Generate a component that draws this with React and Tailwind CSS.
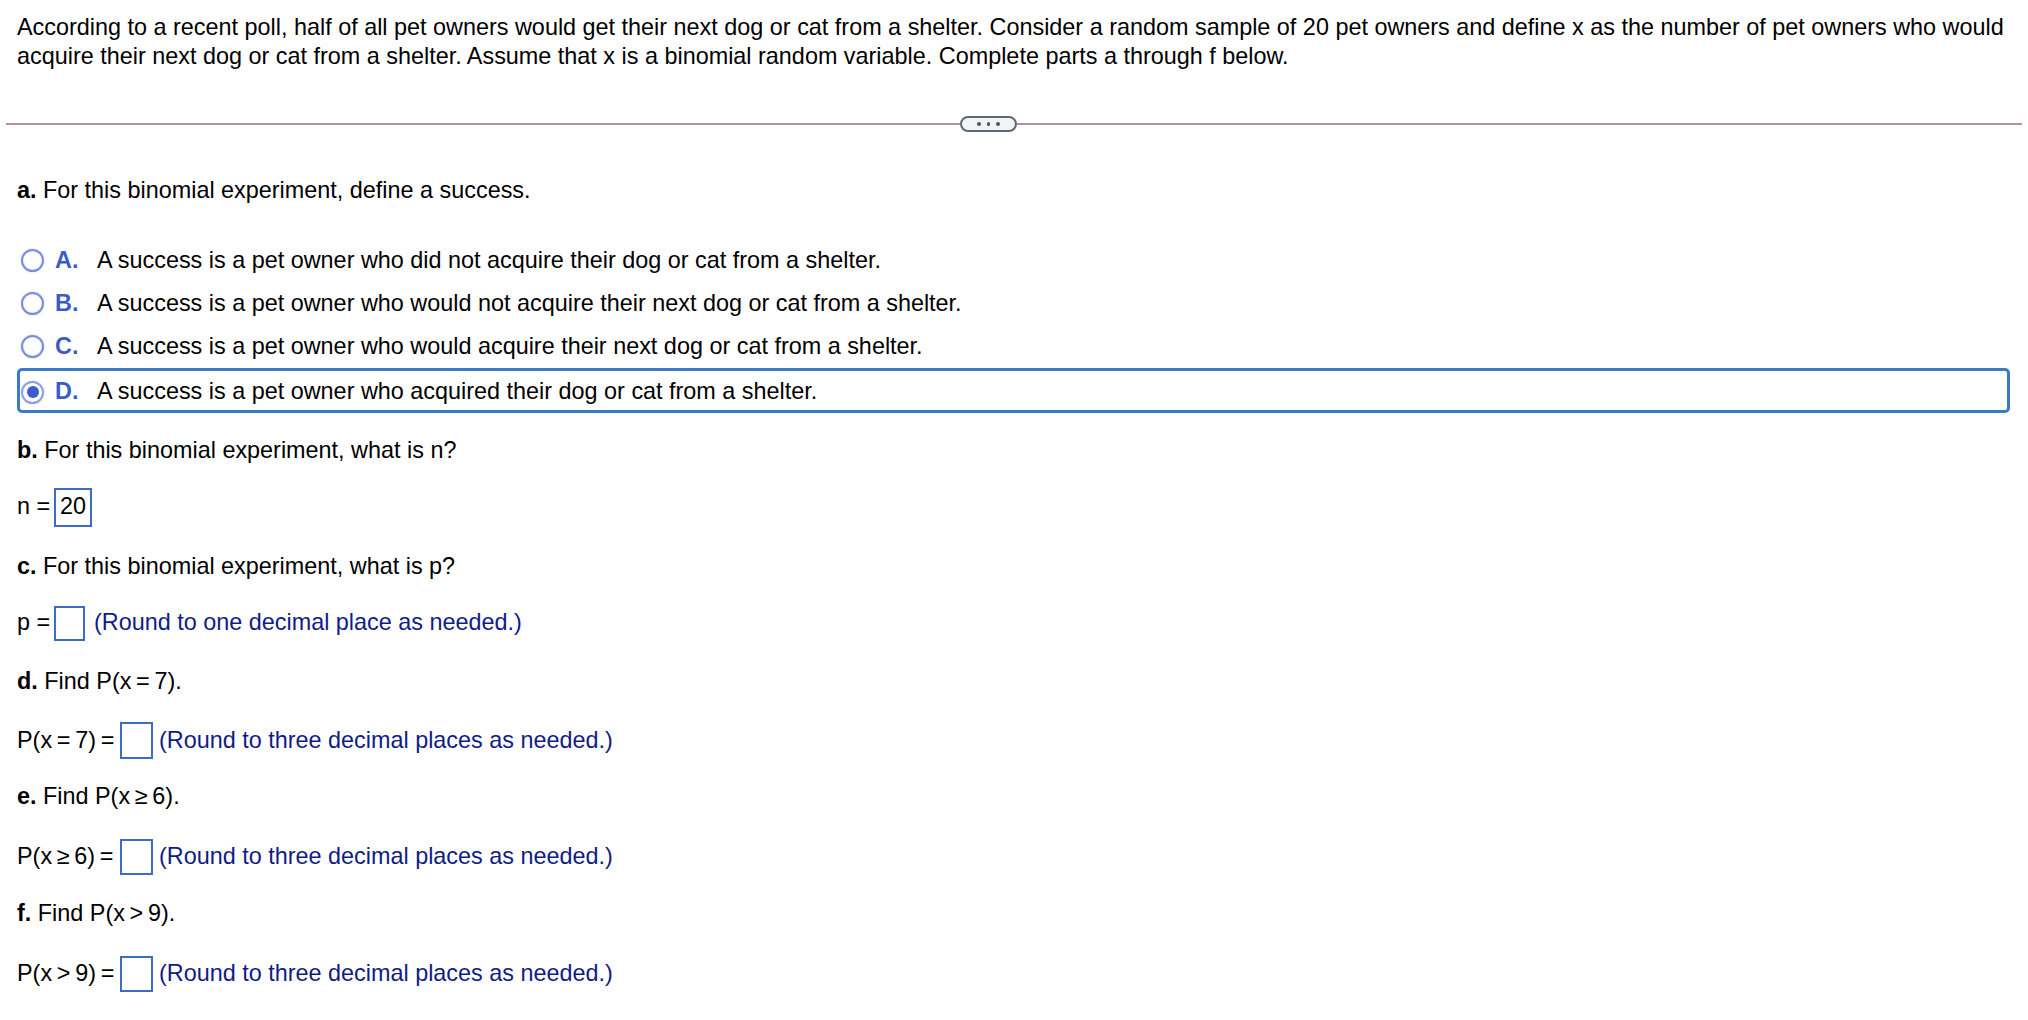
import React from "react";

const font = { fontFamily: '"Liberation Sans", Arial, sans-serif' };

const options = [
  { letter: "A.", text: "A success is a pet owner who did not acquire their dog or cat from a shelter." },
  { letter: "B.", text: "A success is a pet owner who would not acquire their next dog or cat from a shelter." },
  { letter: "C.", text: "A success is a pet owner who would acquire their next dog or cat from a shelter." },
  { letter: "D.", text: "A success is a pet owner who acquired their dog or cat from a shelter.", selected: true },
];

const Radio = ({ checked }) => (
  <div
    className={`w-[23px] h-[23px] shrink-0 rounded-full flex items-center justify-center border-2 ${
      checked
        ? "border-[#8c9fe4] shadow-[0_0_2px_#c3ccf1]"
        : "border-[#7b8cd9] shadow-[0_0_2px_#c3ccf1,inset_0_0_2px_#cfd7f4]"
    }`}
  >
    {checked && <div className="w-[12px] h-[12px] rounded-full bg-[#3b5bcf]"></div>}
  </div>
);

const AnswerBox = ({ value, className }) => (
  <div
    className={`border-2 border-[#3d6cc6] flex items-center justify-center shrink-0 ${className}`}
  >
    {value}
  </div>
);

const Heading = ({ letter, children, className }) => (
  <div className={`h-[30px] leading-[30px] ${className}`}>
    <span className="font-bold">{letter}</span> {children}
  </div>
);

const Hint = ({ children }) => <span className="text-[#101c86]">{children}</span>;

export default function App() {
  return (
    <div className="bg-white min-h-[1020px] text-black text-[23.4px]" style={font}>
      {/* question stem */}
      <div className="pl-[17px] pr-[20px] pt-[13px] leading-[29px]">
        According to a recent poll, half of all pet owners would get their next dog or cat from a shelter.
        Consider a random sample of 20 pet owners and define x as the number of pet owners who would
        acquire their next dog or cat from a shelter. Assume that x is a binomial random variable.
        Complete parts a through f below.
      </div>

      {/* separator */}
      <div className="mt-[45px] ml-[6px] w-[2016px] h-[16px] flex items-center">
        <div className="w-[954px] h-[2px] bg-[#b98e9d]"></div>
        <div className="w-[57px] h-[16px] rounded-full border-2 border-[#5d6975] bg-[#f1f3f5] flex items-center justify-center gap-[6px]">
          <div className="w-[4px] h-[4px] rounded-full bg-[#4a5460]"></div>
          <div className="w-[3px] h-[4px] rounded-full bg-[#4a5460]"></div>
          <div className="w-[4px] h-[4px] rounded-full bg-[#4a5460]"></div>
        </div>
        <div className="flex-1 h-[2px] bg-[#b98e9d]"></div>
      </div>

      <div className="pl-[17px]">
        <Heading letter="a." className="mt-[43px]">For this binomial experiment, define a success.</Heading>

        <div className="mt-[34px]">
          {options.map((o) => (
            <div
              key={o.letter}
              className={`w-[1993px] flex items-center pl-[1px] rounded-[5px] border-[3px] ${
                o.selected ? "h-[45px] border-[#3a7bc8] pt-[3px]" : "h-[43px] border-transparent"
              }`}
            >
              <Radio checked={o.selected} />
              <span className="ml-[11px] w-[42px] font-bold text-[#3b5cc8]">{o.letter}</span>
              <span>{o.text}</span>
            </div>
          ))}
        </div>

        <Heading letter="b." className="mt-[22px]">For this binomial experiment, what is n?</Heading>
        <div className="mt-[22px] h-[40px] flex items-center">
          <span className="w-[37px] whitespace-nowrap">n =</span>
          <AnswerBox value="20" className="w-[38px] h-[39px]" />
        </div>

        <Heading letter="c." className="mt-[24px]">For this binomial experiment, what is p?</Heading>
        <div className="mt-[24px] h-[36px] flex items-center">
          <span className="w-[37px] whitespace-nowrap">p =</span>
          <AnswerBox className="w-[31px] h-[35px]" />
          <span className="ml-[9px]"><Hint>(Round to one decimal place as needed.)</Hint></span>
        </div>

        <Heading letter="d." className="mt-[25px]">Find P(x{"\u2009"}={"\u2009"}7).</Heading>
        <div className="mt-[26px] h-[37px] flex items-center">
          <span className="w-[103px] whitespace-nowrap">P(x{"\u2009"}={"\u2009"}7){"\u2009"}=</span>
          <AnswerBox className="w-[33px] h-[37px]" />
          <span className="ml-[6px]"><Hint>(Round to three decimal places as needed.)</Hint></span>
        </div>

        <Heading letter="e." className="mt-[22px]">Find P(x{"\u2009"}≥{"\u2009"}6).</Heading>
        <div className="mt-[27px] h-[37px] flex items-center">
          <span className="w-[103px] whitespace-nowrap">P(x{"\u2009"}≥{"\u2009"}6){"\u2009"}=</span>
          <AnswerBox className="w-[33px] h-[36px]" />
          <span className="ml-[6px]"><Hint>(Round to three decimal places as needed.)</Hint></span>
        </div>

        <Heading letter="f." className="mt-[23px]">Find P(x{"\u2009"}&gt;{"\u2009"}9).</Heading>
        <div className="mt-[27px] h-[37px] flex items-center">
          <span className="w-[103px] whitespace-nowrap">P(x{"\u2009"}&gt;{"\u2009"}9){"\u2009"}=</span>
          <AnswerBox className="w-[33px] h-[36px]" />
          <span className="ml-[6px]"><Hint>(Round to three decimal places as needed.)</Hint></span>
        </div>
      </div>
    </div>
  );
}
